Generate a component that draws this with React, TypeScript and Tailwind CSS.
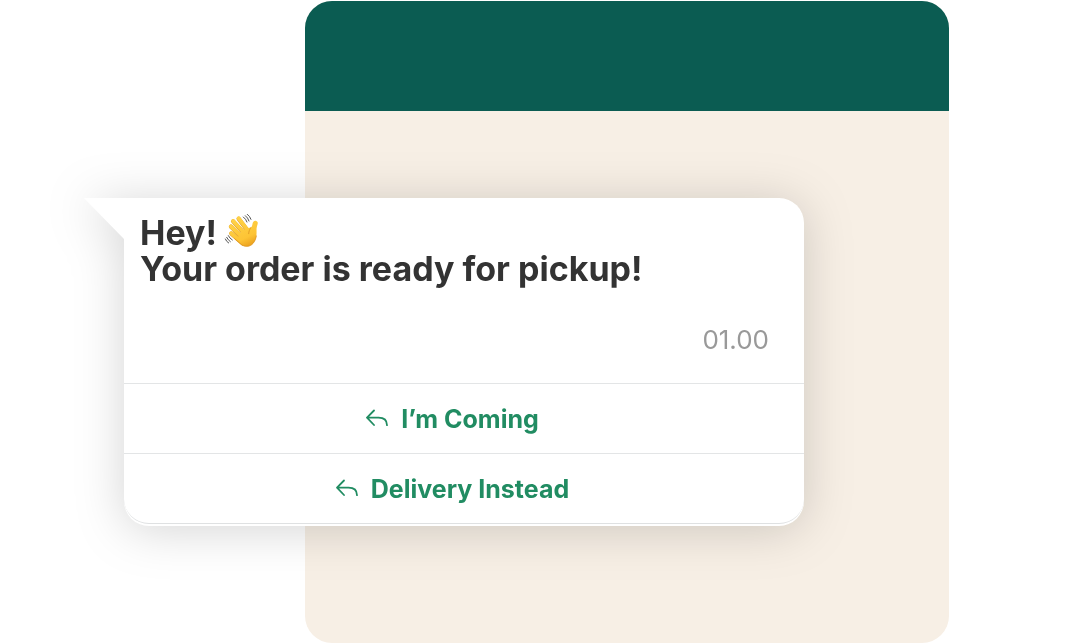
function WavingHand() {
  return (
    <svg viewBox="0 0 150 150" className="-mt-1 -ml-px h-[50px] w-[50px] shrink-0" role="img" aria-label="Waving hand">
      <defs>
        <linearGradient id="skin" gradientUnits="userSpaceOnUse" x1="55" y1="35" x2="98" y2="124">
          <stop offset="0" stopColor="#ffd348" />
          <stop offset="0.7" stopColor="#fdc435" />
          <stop offset="1" stopColor="#e99d1c" />
        </linearGradient>
      </defs>
      <g fill="none" stroke="#e0a02a" strokeWidth="13" strokeLinecap="round">
        <path d="M46 82.500L80 112" />
        <path d="M45 62L76 92" />
        <path d="M51.500 46L86 84" />
        <path d="M68 38L96 76" />
      </g>
      <g fill="none" stroke="url(#skin)" strokeWidth="11.500" strokeLinecap="round">
        <path d="M46 82L80 111" />
        <path d="M45 61.500L78 92" />
        <path d="M51.500 45L88 84" />
        <path d="M68 37L98 76" />
      </g>
      <path
        d="M66 96C70 80 84 66 101 65C107 65 108 60 109 56C110 47 115 43 121 45C128 48 125 55 123 61C120 69 123 77 121 90C118 108 107 121 93 121C83 121 77 117 70 110Z"
        fill="url(#skin)"
      />
      <path d="M104 65C101 72 98 76 98 83" fill="none" stroke="#dc941f" strokeWidth="2.400" strokeLinecap="round" />
      <path d="M56 98L72 112C78 118 84 121 93 121C107 121 118 108 121 90" fill="none" stroke="#dd9420" strokeWidth="2.400" strokeLinecap="round" />
      <g fill="none" stroke="#555" strokeWidth="3" strokeLinecap="round">
        <path d="M82 33Q90 39 93 48" />
        <path d="M88 29Q96 35 99 45" />
        <path d="M94 25Q102 31 105 40" />
        <path d="M37 89Q41 97 49 102" />
        <path d="M32 94Q36 102 43 107" />
        <path d="M28 99Q31 107 38 111" />
      </g>
    </svg>
  );
}

function ReplyIcon() {
  return (
    <svg viewBox="0 0 24 24" className="h-6 w-6 shrink-0" fill="none" stroke="currentColor" strokeWidth="1.8" strokeLinecap="round" strokeLinejoin="round" aria-hidden="true">
      <path d="M9 3.500 2 10.700 9 18M2.200 10.700H13.500C19 10.700 22 13.500 22 18.200" />
    </svg>
  );
}

function ReplyButton({ label }: { label: string }) {
  return (
    <button
      type="button"
      className="flex h-[70px] w-full items-center justify-center gap-3 border-t border-[#e3e5e6] pr-6 text-[25px] leading-8 font-bold text-[#218c62]"
    >
      <ReplyIcon />
      <span>{label}</span>
    </button>
  );
}

export default function App() {
  return (
    <main className="grid min-h-screen overflow-hidden bg-white font-['Inter',sans-serif]">
      <section className="col-start-1 row-start-1 mt-px mr-[127px] ml-[305px] overflow-hidden rounded-[27px] bg-[#f7efe5]">
        <header className="h-[110px] bg-[#0b5c52]" />
      </section>

      <article className="relative col-start-1 row-start-1 mt-[198px] mr-[272px] ml-[124px] self-start drop-shadow-[0_4px_24px_rgba(0,0,0,0.17)]">
        <svg viewBox="0 0 42 44" className="absolute top-0 -left-10 h-11 w-[42px]" aria-hidden="true">
          <path d="M0 0H42V44L40 41Z" fill="#fff" />
        </svg>
        <div className="rounded-[25px] rounded-tl-none bg-white pb-[2px]">
          <div className="overflow-hidden rounded-b-[25px] border-b border-[#dfe1e2]">
            <div className="flex h-[185px] flex-col px-4 pt-[17px]">
              <h1 className="text-[34px] leading-9 font-bold text-[#333333]">
                <span className="flex h-9 items-center">
                  Hey!
                  <WavingHand />
                </span>
                <span className="block">Your order is ready for pickup!</span>
              </h1>
              <time className="mt-9 mr-[19px] self-end pt-px text-[26px] leading-8 text-[#999999]">01.00</time>
            </div>
            <ReplyButton label="I’m Coming" />
            <ReplyButton label="Delivery Instead" />
          </div>
        </div>
      </article>
    </main>
  );
}
